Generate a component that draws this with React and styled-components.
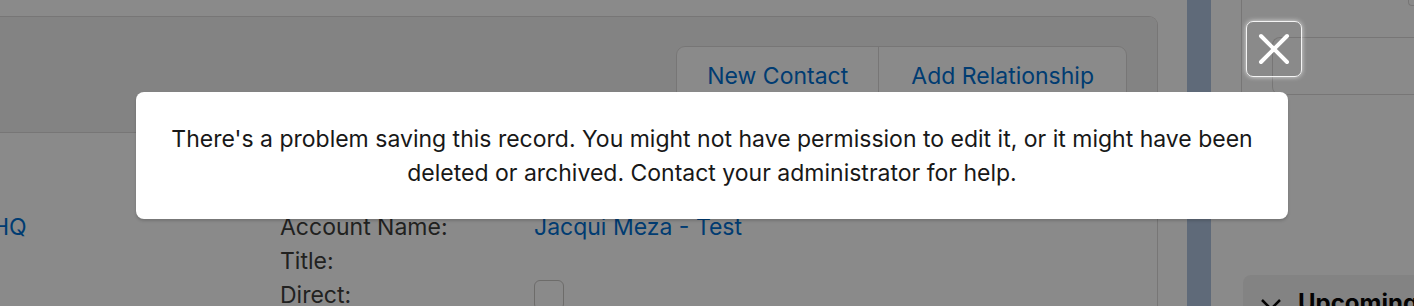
import React from 'react'
import styled, { createGlobalStyle } from 'styled-components'

const GlobalStyle = createGlobalStyle`
  html, body {
    margin: 0;
    padding: 0;
    background: #fff;
    overflow: hidden;
  }
  body {
    font-family: Inter, 'Liberation Sans', Arial, sans-serif;
    color: #3e3e3c;
  }
`

const Page = styled.div`
  position: relative;
  display: flex;
  width: 1414px;
  height: 306px;
  overflow: hidden;
`

const Main = styled.div`
  width: 1187px;
  flex-shrink: 0;
  padding-top: 16px;
  background: #fff;
`

const Card = styled.div`
  margin-left: -20px;
  width: 1178px;
  height: 320px;
  box-sizing: border-box;
  border: 1px solid #dddbda;
  border-left: none;
  border-radius: 0 9px 0 0;
  overflow: hidden;
`

const CardHeader = styled.div`
  display: flex;
  justify-content: flex-end;
  align-items: flex-start;
  height: 116px;
  box-sizing: border-box;
  padding: 29px 30px 0 0;
  background: #f3f2f2;
  border-bottom: 1px solid #dddbda;
`

const ButtonGroup = styled.div`
  display: flex;
  background: #fff;
  border: 1px solid #dddbda;
  border-radius: 9px;
  overflow: hidden;
`

const GroupButton = styled.button`
  height: 58px;
  padding: 0 ${p => p.$pad || 31}px;
  border: none;
  border-left: ${p => (p.$first ? 'none' : '1px solid #dddbda')};
  background: transparent;
  color: #0070d2;
  font-family: inherit;
  font-size: 23px;
  cursor: pointer;
`

const CardBody = styled.div`
  display: grid;
  grid-template-columns: 284px 254px 1fr;
  grid-auto-rows: 34px;
  padding: 77px 0 0 16px;
  font-size: 23px;
  line-height: 34px;
`

const Cell = styled.div`
  display: flex;
  align-items: center;
  white-space: nowrap;
  margin-left: ${p => p.$shift || 0}px;
  color: ${p => (p.$link ? '#0070d2' : '#3e3e3c')};
`

const Checkbox = styled.span`
  width: 28px;
  height: 28px;
  border: 1px solid #c9c7c5;
  border-radius: 6px;
  background: #fff;
`

const Stripe = styled.div`
  width: 24px;
  flex-shrink: 0;
  background: #b0c4df;
`

const Side = styled.div`
  flex: 1;
  display: flex;
  flex-direction: column;
  padding-left: 30px;
  background: #fff;
  overflow: hidden;
`

const SidePanel = styled.div`
  flex-shrink: 0;
  height: 200px;
  border-left: 1px solid #dddbda;
  display: flex;
  flex-direction: column;
`

const Corner = styled.div`
  align-self: flex-end;
  width: 6px;
  height: 5px;
  border-left: 1px solid #dddbda;
  border-bottom: 1px solid #dddbda;
  border-radius: 0 0 0 4px;
  margin-right: -1px;
`

const Field = styled.div`
  margin: 31px 0 0 30px;
  height: 56px;
  border: 1px solid #dddbda;
  border-right: none;
  border-radius: 8px 0 0 8px;
`

const Upcoming = styled.div`
  flex-shrink: 0;
  margin: 75px 0 0 2px;
  height: 60px;
  display: flex;
  align-items: flex-start;
  gap: 16px;
  padding: 13px 0 0 17px;
  background: #f3f2f2;
  border-radius: 8px 0 0 0;
  font-size: 24px;
  line-height: 30px;
  font-weight: 700;
  color: #080707;
  white-space: nowrap;
`

const ChevronSvg = styled.svg`
  flex-shrink: 0;
  margin-top: 4px;
`

const Overlay = styled.div`
  position: absolute;
  inset: 0;
  background: rgba(0, 0, 0, 0.46);
`

const CloseButton = styled.button`
  position: absolute;
  left: 1246px;
  top: 21px;
  width: 56px;
  height: 56px;
  display: flex;
  align-items: center;
  justify-content: center;
  padding: 0;
  background: transparent;
  border: 1.5px solid rgba(255, 255, 255, 0.9);
  border-radius: 7px;
  box-shadow: 0 0 5px rgba(255, 255, 255, 0.7);
  cursor: pointer;
`

const Modal = styled.div`
  position: absolute;
  left: 136px;
  top: 92px;
  width: 1152px;
  box-sizing: border-box;
  padding: 30px 20px 29px;
  background: #fff;
  border-radius: 8px;
  box-shadow: 0 2px 3px rgba(0, 0, 0, 0.16);
  text-align: center;
  font-size: 23px;
  line-height: 34px;
  color: #181818;
`

function CloseIcon() {
  return (
    <svg width="32" height="32" viewBox="0 0 32 32">
      <path
        d="M3 3 L29 29 M29 3 L3 29"
        stroke="#fff"
        strokeWidth="4"
        strokeLinecap="round"
        fill="none"
      />
    </svg>
  )
}

function Chevron() {
  return (
    <ChevronSvg width="22" height="22" viewBox="0 0 22 22">
      <path
        d="M2 8 L11 17 L20 8"
        stroke="#080707"
        strokeWidth="2.5"
        fill="none"
      />
    </ChevronSvg>
  )
}

export default function App() {
  return (
    <>
      <GlobalStyle />
      <Page>
        <Main>
          <Card>
            <CardHeader>
              <ButtonGroup>
                <GroupButton $first $pad={30}>New Contact</GroupButton>
                <GroupButton $pad={32}>Add Relationship</GroupButton>
              </ButtonGroup>
            </CardHeader>
            <CardBody>
              <Cell $link $shift={-4}>HQ</Cell>
              <Cell>Account Name:</Cell>
              <Cell $link>Jacqui Meza - Test</Cell>
              <Cell />
              <Cell>Title:</Cell>
              <Cell />
              <Cell />
              <Cell>Direct:</Cell>
              <Cell>
                <Checkbox />
              </Cell>
            </CardBody>
          </Card>
        </Main>
        <Stripe />
        <Side>
          <SidePanel>
            <Corner />
            <Field />
          </SidePanel>
          <Upcoming>
            <Chevron />
            <span>Upcoming &amp; Overdue</span>
          </Upcoming>
        </Side>
        <Overlay>
          <CloseButton aria-label="Close">
            <CloseIcon />
          </CloseButton>
          <Modal>
            There's a problem saving this record. You might not have permission to edit it, or it might have been
            deleted or archived. Contact your administrator for help.
          </Modal>
        </Overlay>
      </Page>
    </>
  )
}
